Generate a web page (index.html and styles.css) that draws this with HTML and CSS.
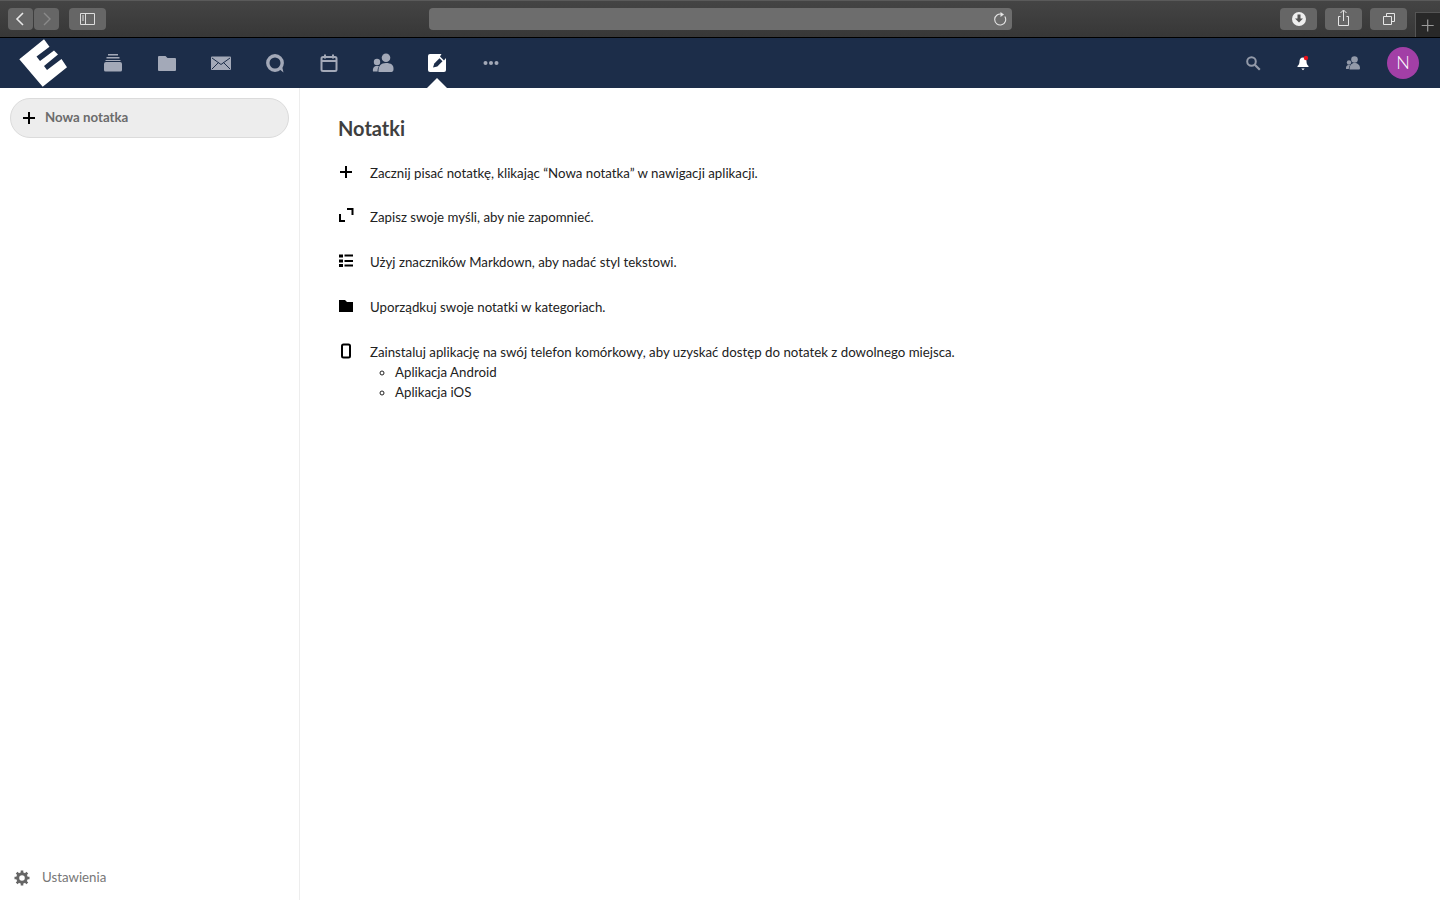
FILE: index.html
```html
<!DOCTYPE html>
<html lang="pl">
<head>
  <meta charset="UTF-8">
  <title>Notatki</title>
  <link rel="stylesheet" href="styles.css">
</head>
<body>
  <div class="browser-bar">
    <div class="bar-btn bar-btn-nav">
      <svg width="25" height="22" viewBox="0 0 25 22"><path d="M15 5l-6 6 6 6" fill="none" stroke="#e8e8e8" stroke-width="1.6"/></svg>
    </div>
    <div class="bar-btn bar-btn-nav bar-btn-next">
      <svg width="25" height="22" viewBox="0 0 25 22"><path d="M10 5l6 6-6 6" fill="none" stroke="#8a8a8a" stroke-width="1.4"/></svg>
    </div>
    <div class="bar-btn bar-btn-wide bar-btn-sidebar">
      <svg width="37" height="22" viewBox="0 0 37 22"><path d="M11.500 5.500h14v11h-14zM16.500 5.500v11" fill="none" stroke="#ddd"/><path d="M13 8h2M13 10h2M13 12h2" stroke="#ddd"/></svg>
    </div>
    <div class="address">
      <svg width="14" height="14" viewBox="0 0 14 14"><path d="M11.800 4.500a5.500 5.500 0 1 1-2.800-2.200" fill="none" stroke="#e6e6e6" stroke-width="1.100"/><path d="M7.500 0l3.500 2.500-3.500 2.500z" fill="#e6e6e6"/></svg>
    </div>
    <div class="bar-btn bar-btn-wide">
      <svg width="37" height="22" viewBox="0 0 37 22"><circle cx="19" cy="11" r="7" fill="#eee"/><path d="M17.500 6.500h3v4h2.500l-4 4-4-4h2.500z" fill="#555"/></svg>
    </div>
    <div class="bar-btn bar-btn-wide">
      <svg width="37" height="22" viewBox="0 0 37 22"><path d="M15.500 8.500h-2v9h10v-9h-2" fill="none" stroke="#e6e6e6"/><path d="M18.500 13V2.500M15.500 5l3-3 3 3" fill="none" stroke="#e6e6e6"/></svg>
    </div>
    <div class="bar-btn bar-btn-wide">
      <svg width="37" height="22" viewBox="0 0 37 22"><path d="M13.500 8.500h8v8h-8z" fill="none" stroke="#e6e6e6"/><path d="M16.500 8V5.500h8v8h-2.500" fill="none" stroke="#e6e6e6"/></svg>
    </div>
    <div class="new-tab">
      <svg width="24" height="24" viewBox="0 0 24 24"><path d="M11.700 6.500v12M5.700 12.500h12" stroke="#9a9a9a" stroke-width="1.200"/></svg>
    </div>
  </div>

  <header class="topbar">
    <a class="logo">
      <svg width="86" height="50" viewBox="0 0 86 50"><polygon fill="#fff" points="19.300,21.300 44,1.300 49.500,8.700 36.500,18.500 40,23 54,12.500 58,16.500 44,28 47,32 61.500,21 67,29.300 42.700,48.700"/></svg>
    </a>
    <nav class="app-nav">
      <a class="app-item">
        <svg width="20" height="20" viewBox="0 0 20 20"><path d="M5 1h10v1.500H5zM3.500 4h13v1.500h-13zM2.500 7h15v1H2.500z" fill="#a3a9b8"/><path d="M3 9h14a2 2 0 0 1 2 2v6a1.500 1.500 0 0 1-1.500 1.500h-15A1.500 1.500 0 0 1 1 17v-6a2 2 0 0 1 2-2z" fill="#a3a9b8"/></svg>
      </a>
      <a class="app-item">
        <svg width="20" height="20" viewBox="0 0 20 20"><path d="M2 3h6.500l2 2H18a1 1 0 0 1 1 1v11a1 1 0 0 1-1 1H2a1 1 0 0 1-1-1V4a1 1 0 0 1 1-1z" fill="#a3a9b8"/></svg>
      </a>
      <a class="app-item">
        <svg width="22" height="20" viewBox="0 0 22 20"><rect x="1" y="3.500" width="20" height="13.500" rx="1" fill="#a3a9b8"/><path d="M2 5l9 6.500L20 5M2 16l6.500-6.500M20 16l-6.500-6.500" fill="none" stroke="#1c2d49" stroke-width="1"/></svg>
      </a>
      <a class="app-item">
        <svg width="20" height="20" viewBox="0 0 20 20"><circle cx="10" cy="10" r="7.200" fill="none" stroke="#a3a9b8" stroke-width="3.400"/><path d="M13.500 15.500l5 4-1.500-6.500z" fill="#a3a9b8"/></svg>
      </a>
      <a class="app-item">
        <svg width="20" height="20" viewBox="0 0 20 20"><rect x="2.500" y="4" width="15" height="14" rx="1.500" fill="none" stroke="#a3a9b8" stroke-width="2"/><path d="M2 8h16" stroke="#a3a9b8" stroke-width="2"/><path d="M6 1.500v4M14 1.500v4" stroke="#a3a9b8" stroke-width="2"/></svg>
      </a>
      <a class="app-item">
        <svg width="22" height="20" viewBox="0 0 22 20"><circle cx="14" cy="4.700" r="4.300" fill="#a3a9b8"/><path d="M6.500 19c-.5-6 2.500-9 7.500-9s8 2 7.500 6.500c0 1.500-1 2.500-2 2.500z" fill="#a3a9b8"/><circle cx="5" cy="9" r="3.200" fill="#a3a9b8"/><path d="M1 18.500c-.5-3.500 1-5.500 4-5.500 1 0 1.500.1 2 .3-1 1.500-1.500 3-1.400 5.200z" fill="#a3a9b8"/></svg>
      </a>
      <a class="app-item app-item-active">
        <svg width="20" height="20" viewBox="0 0 20 20"><rect x="1" y="1" width="18" height="18" rx="2" fill="#fff"/><path d="M6 14.500l1.300-4 5.200-5.200 3 3-5.200 5.200z" fill="#1c2d49"/><path d="M14.500 1H19v4l-2 2.500-4-4z" fill="#1c2d49"/></svg>
      </a>
      <a class="app-item">
        <svg width="20" height="20" viewBox="0 0 20 20"><circle cx="4.500" cy="10" r="2" fill="#a3a9b8"/><circle cx="10" cy="10" r="2" fill="#a3a9b8"/><circle cx="15.500" cy="10" r="2" fill="#a3a9b8"/></svg>
      </a>
    </nav>
    <div class="header-right">
      <a class="header-item">
        <svg width="16" height="16" viewBox="0 0 16 16"><circle cx="6.500" cy="6.500" r="4.300" fill="none" stroke="#939aa9" stroke-width="2"/><path d="M9.800 9.800l5 5" stroke="#939aa9" stroke-width="2.200"/></svg>
      </a>
      <a class="header-item">
        <svg width="16" height="16" viewBox="0 0 16 16"><path d="M8 2.500c-2.500 0-3.500 2-3.500 4 0 2.500-.8 3.500-2 4.500v1h11v-1c-1.200-1-2-2-2-4.500 0-2-1-4-3.500-4z" fill="#fff"/><path d="M6.300 13.500h3.400L8 15.200z" fill="#fff"/><circle cx="11" cy="3" r="2.200" fill="#e9101a"/></svg>
      </a>
      <a class="header-item">
        <svg width="16" height="16" viewBox="0 0 16 16"><circle cx="9.500" cy="4.500" r="3.300" fill="#939aa9"/><path d="M4.500 14.500c-.3-4 2-6.500 5-6.500s5.500 2 5.500 5c0 1-.5 1.500-1.500 1.500z" fill="#939aa9"/><circle cx="4" cy="7.500" r="2.200" fill="#939aa9"/><path d="M1 14c-.3-2.500.8-4 3-4 .5 0 .8 0 1 .2-.8 1-1.200 2.300-1.200 3.800z" fill="#939aa9"/></svg>
      </a>
      <a class="header-item">
        <span class="avatar">N</span>
      </a>
    </div>
  </header>

  <div class="page">
    <aside class="sidebar">
      <a class="new-note">
        <svg width="14" height="14" viewBox="0 0 14 14"><path d="M7 1v12M1 7h12" stroke="#000" stroke-width="2"/></svg>
        <span>Nowa notatka</span>
      </a>
      <a class="settings">
        <svg width="16" height="16" viewBox="0 0 16 16"><circle cx="8" cy="8" r="4.300" fill="none" stroke="#666" stroke-width="3"/><path d="M8 .5v3M8 12.500v3M.5 8h3M12.500 8h3M2.700 2.700l2.100 2.100M11.200 11.200l2.100 2.100M2.700 13.300l2.100-2.100M11.200 4.800l2.100-2.100" stroke="#666" stroke-width="2.600"/></svg>
        <span>Ustawienia</span>
      </a>
    </aside>
    <main class="content">
      <h2>Notatki</h2>
      <div class="help-row">
        <svg width="16" height="16" viewBox="0 0 16 16"><path d="M8 2v12M2 8h12" stroke="#000" stroke-width="2"/></svg>
        <div>Zacznij pisać notatkę, klikając “Nowa notatka” w nawigacji aplikacji.</div>
      </div>
      <div class="help-row">
        <svg width="16" height="16" viewBox="0 0 16 16"><path d="M2 7v7h5" fill="none" stroke="#000" stroke-width="2" transform="translate(0 -1)"/><path d="M9 2h5.500v6" fill="none" stroke="#000" stroke-width="2" transform="translate(0 -1)"/></svg>
        <div>Zapisz swoje myśli, aby nie zapomnieć.</div>
      </div>
      <div class="help-row">
        <svg width="16" height="16" viewBox="0 0 16 16"><path d="M1 1.500h4v3H1zM1 6.500h4v3H1zM1 11h4v3H1z" fill="#000"/><path d="M6.500 2.500H15M6.500 8H15M6.500 12.500H15" stroke="#000" stroke-width="1.800"/></svg>
        <div>Użyj znaczników Markdown, aby nadać styl tekstowi.</div>
      </div>
      <div class="help-row">
        <svg width="16" height="16" viewBox="0 0 16 16"><path d="M1 2h6l2 2h6v10H1z" fill="#000"/></svg>
        <div>Uporządkuj swoje notatki w kategoriach.</div>
      </div>
      <div class="help-row">
        <svg width="16" height="16" viewBox="0 0 16 16"><rect x="4" y="1.500" width="8" height="13" rx="1.500" fill="none" stroke="#000" stroke-width="2"/></svg>
        <div>
          Zainstaluj aplikację na swój telefon komórkowy, aby uzyskać dostęp do notatek z dowolnego miejsca.
          <ul class="apps">
            <li>Aplikacja Android</li>
            <li>Aplikacja iOS</li>
          </ul>
        </div>
      </div>
    </main>
  </div>
</body>
</html>
```

FILE: styles.css
```css
* {
  box-sizing: border-box;
}
html, body {
  height: 100%;
}
body {
  margin: 0;
  overflow: hidden;
  display: flex;
  flex-direction: column;
  font-family: 'Lato', 'Noto Sans', sans-serif;
  font-size: 13.27px;
  line-height: 20px;
  color: #222;
  background: #fff;
}
svg {
  display: block;
  flex: none;
}

.browser-bar {
  flex: none;
  height: 38px;
  display: flex;
  align-items: flex-start;
  padding: 8px 0 0 8px;
  border-top: 1px solid #5a5a5a;
  border-bottom: 1px solid #000;
  background: linear-gradient(#444, #373737);
}
.browser-bar > * {
  margin-top: -1px;
}
.bar-btn {
  height: 22px;
  background: #666;
  border-radius: 4px;
}
.bar-btn-nav {
  width: 25px;
}
.bar-btn-next {
  margin-left: 1px;
}
.bar-btn-wide {
  width: 37px;
  margin-left: 8px;
}
.bar-btn-sidebar {
  margin-left: 10px;
}
.address {
  width: 583px;
  height: 22px;
  margin-left: 323px;
  margin-right: 260px;
  padding-right: 5px;
  display: flex;
  align-items: center;
  justify-content: flex-end;
  background: #6d6d6d;
  border-radius: 4px;
}
.new-tab {
  width: 25px;
  height: 25px;
  margin: 3px 0 0 8px;
  background: #282828;
  border-top: 1px solid #555;
  border-left: 1px solid #555;
}

.topbar {
  flex: none;
  height: 50px;
  display: flex;
  align-items: center;
  background: #1c2d49;
}
.logo {
  width: 86px;
  height: 50px;
}
.app-nav {
  display: flex;
}
.app-item {
  position: relative;
  width: 54px;
  height: 50px;
  display: flex;
  align-items: center;
  justify-content: center;
}
.app-item-active::after {
  content: "";
  position: absolute;
  left: 17px;
  bottom: 0;
  border: 10px solid transparent;
  border-top: 0;
  border-bottom-color: #fff;
}
.header-right {
  margin-left: auto;
  padding-right: 12px;
  display: flex;
}
.header-item {
  width: 50px;
  height: 50px;
  display: flex;
  align-items: center;
  justify-content: center;
}
.avatar {
  width: 32px;
  height: 32px;
  border-radius: 50%;
  background: #a23fa6;
  color: #fff;
  font-size: 18px;
  font-weight: 300;
  line-height: 30px;
  text-align: center;
}

.page {
  flex: 1;
  min-height: 0;
  display: flex;
}
.sidebar {
  width: 300px;
  flex: none;
  display: flex;
  flex-direction: column;
  justify-content: space-between;
  padding: 10px 10px 0;
  border-right: 1px solid #ededed;
}
.new-note {
  width: 279px;
  height: 40px;
  display: flex;
  align-items: center;
  gap: 9px;
  padding-left: 11px;
  background: #ededed;
  border: 1px solid #dbdbdb;
  border-radius: 20px;
  color: #6b6b6b;
  font-weight: 700;
}
.new-note span, .settings span {
  padding-bottom: 2px;
}
.settings {
  height: 44px;
  display: flex;
  align-items: center;
  gap: 12px;
  margin-left: 4px;
  color: #777;
}

.content {
  flex: 1;
  padding: 28px 38px 0;
}
.content h2 {
  margin: 0 0 22.6px;
  font-size: 20px;
  line-height: 24px;
  font-weight: 700;
  color: #3f3f3f;
}
.help-row {
  display: flex;
  gap: 16px;
  margin-bottom: 24.75px;
}
.help-row > svg {
  margin-top: 1px;
}
.apps {
  margin: 0;
  padding-left: 25px;
  list-style: circle;
}
```
